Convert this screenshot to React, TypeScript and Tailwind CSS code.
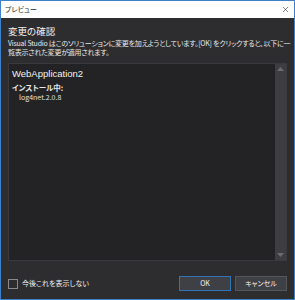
import { X } from "lucide-react";

const jp = "font-['Noto_Sans_CJK_JP','Noto_Sans',sans-serif] [font-feature-settings:'palt']";

export default function App() {
  return (
    <div className={`flex h-[300px] w-[295px] flex-col border border-[#3d80cc] bg-[#2d2d30] ${jp}`}>
      <div className="flex h-[17px] shrink-0 items-center justify-between bg-white pl-[4px] pr-[4px]">
        <span className="text-[7px] leading-none text-[#1e1e1e]">プレビュー</span>
        <X className="h-[9px] w-[9px] text-[#333]" strokeWidth={1.6} />
      </div>

      <div className="flex flex-1 flex-col px-[7px] pt-[6px]">
        <div className="text-[9.5px] leading-[14px] text-[#f1f1f1]">変更の確認</div>
        <p className="mt-[1px] whitespace-nowrap text-[7px] leading-[9px] tracking-[-0.22px] text-[#e8e8e8]">
          Visual Studio はこのソリューションに変更を加えようとしています。[OK] をクリックすると、以下に一
          <br />
          覧表示された変更が適用されます。
        </p>

        <div className="mt-[6px] flex h-[198px] border border-[#3a3a3e] bg-[#232325]">
          <div className="flex-1 px-[3px] pt-[3px]">
            <div className="text-[9.5px] leading-[14px] text-[#f1f1f1] font-['Liberation_Sans',sans-serif]">
              WebApplication2
            </div>
            <div className="mt-[2px] text-[7.5px] font-bold leading-[10px] text-[#e8e8e8]">インストール中:</div>
            <div className="pl-[7px] text-[7px] leading-[9px] text-[#e0e0e0]">log4net.2.0.8</div>
          </div>
          <div className="flex w-[11px] flex-col items-center justify-between bg-[#3e3e42] py-[3px]">
            <svg width="7" height="4" viewBox="0 0 7 4">
              <path d="M0 4 L3.5 0 L7 4 Z" fill="#6b6b70" />
            </svg>
            <svg width="7" height="4" viewBox="0 0 7 4">
              <path d="M0 0 L3.5 4 L7 0 Z" fill="#6b6b70" />
            </svg>
          </div>
        </div>

        <div className="mt-[15px] flex items-center">
          <div className="h-[10px] w-[10px] border border-[#8a8a8e] bg-[#2d2d30]" />
          <span className="ml-[4px] text-[7px] leading-none text-[#f1f1f1]">今後これを表示しない</span>
          <div className="ml-auto flex gap-[4px]">
            <button className="h-[15px] w-[52px] border border-[#2f74b5] bg-[#3f3f46] text-[7px] leading-none text-[#f1f1f1]">
              OK
            </button>
            <button className="h-[15px] w-[52px] border border-[#55555c] bg-[#3f3f46] text-[7px] leading-none text-[#f1f1f1]">
              キャンセル
            </button>
          </div>
        </div>
      </div>
    </div>
  );
}
